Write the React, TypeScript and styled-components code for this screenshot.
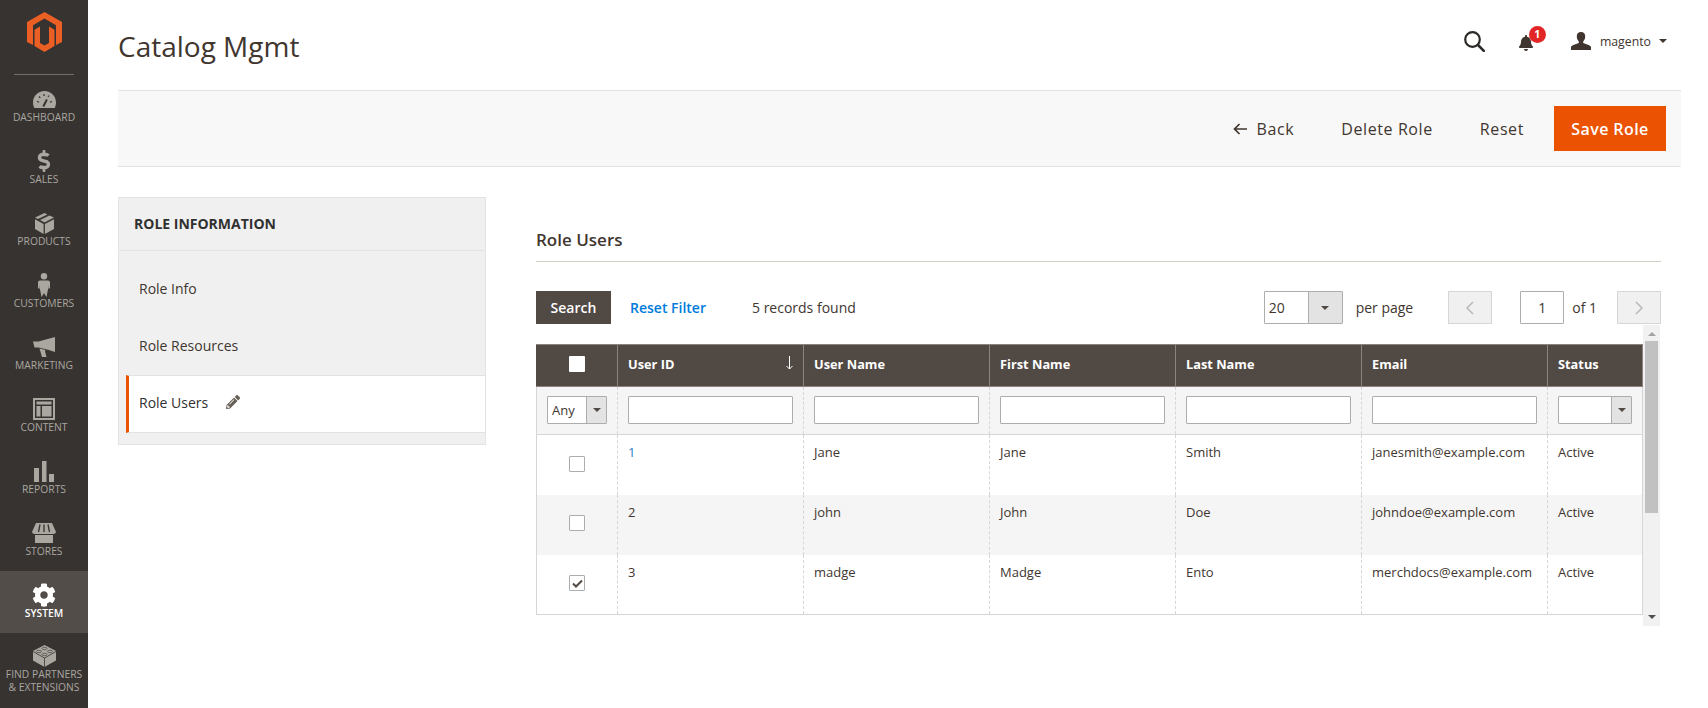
import React from "react";
import styled, { createGlobalStyle } from "styled-components";
import { FaDollarSign, FaCog, FaPencilAlt, FaBell } from "react-icons/fa";

const Global = createGlobalStyle`
  html, body { margin: 0; padding: 0; height: 100%; overflow: hidden; background: #fff; }
  body { font-family: "Open Sans", "Liberation Sans", sans-serif; color: #41362f; }
  * { box-sizing: border-box; }
`;

const Page = styled.div`display: flex; height: 708px; width: 1708px;`;
const Sidebar = styled.nav`width: 88px; flex: none; background: #373330; display: flex; flex-direction: column; align-items: stretch;`;
const LogoBox = styled.div`height: 75px; margin: 0 14px; border-bottom: 1px solid #736e6a; display: flex; justify-content: center; padding-top: 12px;`;
const NavItem = styled.a<{ $active?: boolean; $two?: boolean }>`
  height: 62px; display: flex; flex-direction: column; align-items: center; padding-top: ${p => (p.$two ? 11 : 12)}px;
  background: ${p => (p.$active ? "#524d49" : "transparent")};
  color: ${p => (p.$active ? "#ffffff" : "#aaa6a0")};
  font-weight: ${p => (p.$active ? 600 : 400)};
`;
const NavIcon = styled.div`height: 24px; width: 100%; display: flex; align-items: center; justify-content: center; flex: none;`;
const NavLabel = styled.span`font-size: 10.3px; line-height: 13px; text-transform: uppercase; text-align: center; white-space: nowrap;`;

const Main = styled.main`flex: 1; min-width: 0; padding: 0 27px 0 30px; display: flex; flex-direction: column;`;
const Header = styled.header`height: 90px; flex: none; display: flex; align-items: center; justify-content: space-between;`;
const Title = styled.h1`margin: 2px 0 0; font-size: 28px; font-weight: 400; color: #41362f; line-height: 36px;`;
const HeaderTools = styled.div`display: flex; align-items: center; padding-right: 14px; height: 24px; margin-top: -8px;`;
const BellWrap = styled.div`position: relative; margin-left: 33px; width: 16px; height: 17px; margin-top: 2px;`;
const Badge = styled.span`position: absolute; left: 11px; top: -8px; width: 17px; height: 17px; border-radius: 50%; background: #e22626; color: #fff; font-size: 10.5px; font-weight: 700; display: flex; align-items: center; justify-content: center; line-height: 1;`;
const UserGap = styled.span`width: 37px;`;
const UserName = styled.span`font-size: 12.3px; color: #41362f; margin-left: 9px; margin-right: 8px;`;
const Caret = styled.span<{ $w?: number; $c?: string }>`display: inline-block; width: 0; height: 0; border-left: ${p => (p.$w ?? 4)}px solid transparent; border-right: ${p => (p.$w ?? 4)}px solid transparent; border-top: ${p => ((p.$w ?? 4) + 0)}px solid ${p => p.$c ?? "#41362f"};`;

const ActionBar = styled.div`height: 77px; flex: none; background: #f8f8f8; border-top: 1px solid #e3e3e3; border-bottom: 1px solid #e3e3e3; display: flex; align-items: center; justify-content: flex-end; padding-right: 15px;`;
const ActionLink = styled.a`display: flex; align-items: center; font-size: 16px; letter-spacing: .6px; color: #41362f; font-weight: 500; margin-right: 47px;`;
const SaveButton = styled.button`width: 112px; height: 45px; border: 0; background: #eb5202; color: #fff; font: 600 16px "Open Sans", sans-serif; letter-spacing: .4px; margin-left: -17px;`;

const Content = styled.div`display: flex; margin-top: 30px; align-items: flex-start;`;
const Panel = styled.aside`width: 368px; flex: none; background: #f0f0f0; border: 1px solid #e3e3e3; padding-bottom: 11px;`;
const PanelTitle = styled.div`height: 53px; padding: 0 0 1px 15px; display: flex; align-items: center; font-weight: 700; font-size: 14px; color: #303030; border-bottom: 1px solid #e3e3e3;`;
const PanelLinks = styled.div`padding-top: 10px;`;
const PanelLink = styled.a<{ $active?: boolean }>`
  display: flex; align-items: center; height: ${p => (p.$active ? 58 : 57)}px; font-size: 14px; color: ${p => (p.$active ? "#303030" : "#41362f")};
  padding-left: ${p => (p.$active ? 10 : 20)}px; margin-left: ${p => (p.$active ? 7 : 0)}px; padding-bottom: ${p => (p.$active ? 4 : 2)}px;
  ${p => p.$active ? "background:#fff;border-left:3px solid #eb5202;border-top:1px solid #e3e3e3;border-bottom:1px solid #e3e3e3;" : ""}
`;
const PencilBox = styled.span`margin-left: 18px; display: flex; color: #676056;`;

const Section = styled.section`margin-left: 50px; width: 1125px; display: flex; flex-direction: column;`;
const SectionTitle = styled.h2`margin: 0; height: 65px; font-size: 17px; font-weight: 600; color: #41362f; border-bottom: 1px solid #d6d1c5; padding-top: 33px; line-height: 20px;`;

const Toolbar = styled.div`display: flex; align-items: center; height: 33px; margin-top: 29px;`;
const SearchButton = styled.button`width: 75px; height: 33px; border: 0; background: #514943; color: #fff; font: 600 14px "Open Sans", sans-serif;`;
const ResetLink = styled.a`color: #007bdb; font-size: 14px; font-weight: 600; margin-left: 19px;`;
const Found = styled.span`font-size: 14px; color: #41362f; margin-left: 46px;`;
const Spacer = styled.div`flex: 1;`;
const PerSelect = styled.div`width: 79px; height: 33px; border: 1px solid #adadad; background: #fff; display: flex; font-size: 14px; border-radius: 1px;`;
const SelectValue = styled.span<{ $lh?: number }>`flex: 1; padding-left: 4px; line-height: ${p => p.$lh ?? 31}px;`;
const SelectArrow = styled.span<{ $w: number }>`width: ${p => p.$w}px; flex: none; background: #e3e3e3; border-left: 1px solid #adadad; display: flex; align-items: center; justify-content: center;`;
const PagerText = styled.span<{ $ml: number }>`font-size: 14px; margin-left: ${p => p.$ml}px;`;
const PageButton = styled.div<{ $ml: number }>`width: 44px; height: 33px; margin-left: ${p => p.$ml}px; background: #f0f0f0; border: 1px solid #d6d6d6; display: flex; align-items: center; justify-content: center;`;
const PageInput = styled.input`width: 44px; height: 33px; margin-left: 28px; border: 1px solid #adadad; border-radius: 1px; text-align: center; font: 14px "Open Sans", sans-serif; color: #41362f; padding: 0;`;

const GridArea = styled.div`display: flex; height: 301px; margin-top: 1px;`;
const TableBox = styled.div`width: 1107px; flex: none; padding-top: 19px; overflow: hidden;`;
const GridTable = styled.table`width: 1106px; table-layout: fixed; border-collapse: collapse; border-left: 1px solid #d6d6d6; border-right: 1px solid #d6d6d6; border-bottom: 1px solid #d6d6d6;`;
const Th = styled.th`height: 42px; background: #514943; color: #fff; font-size: 12.8px; font-weight: 700; text-align: left; padding: 0 10px 3px; border: 1px solid #8a837f; position: relative; &:first-child{ border-left-color:#514943; padding: 0 0 5px; text-align: center; }`;
const SortArrow = styled.svg`position: absolute; right: 10px; top: 11px;`;
const FilterCell = styled.td<{ $first?: boolean }>`height: 48px; background: #f5f5f5; padding: 0 10px 2px; border-left: ${p => (p.$first ? "0" : "1px dashed #d6d6d6")}; border-bottom: 1px solid #d6d6d6;`;
const FilterInput = styled.input`display: block; width: 100%; height: 28px; border: 1px solid #adadad; border-radius: 1px; background: #fff;`;
const FilterSelect = styled.div<{ $w: number }>`display: flex; width: ${p => p.$w}px; height: 28px; border: 1px solid #adadad; border-radius: 1px; background: #fff; font-size: 13px; line-height: 28px;`;
const Td = styled.td<{ $odd: boolean; $link?: boolean }>`height: 60px; vertical-align: top; font-size: 13px; line-height: 18px; padding: 8px 10px 0; border-left: 1px dashed #d6d6d6; background: ${p => (p.$odd ? "#f5f5f5" : "#fff")}; color: ${p => (p.$link ? "#2f7fc4" : "#41362f")}; white-space: nowrap; &:first-child{ border-left: 0; text-align: center; padding: 18px 0 0; }`;
const CheckBox = styled.span<{ $white?: boolean }>`display: inline-flex; align-items: center; justify-content: center; vertical-align: middle; width: 16px; height: 16px; background: #fff; border: ${p => (p.$white ? "0" : "1px solid #adadad")}; border-radius: 1px;`;

const ScrollTrack = styled.div`width: 17px; flex: none; background: #f1f1f1; display: flex; flex-direction: column; align-items: center;`;
const ScrollUp = styled.span`margin-top: 7px; width: 0; height: 0; border-left: 4px solid transparent; border-right: 4px solid transparent; border-bottom: 4px solid #a3a3a3;`;
const ScrollThumb = styled.div`width: 13px; height: 172px; background: #c1c1c1; margin-top: 5px;`;
const ScrollDown = styled.span`margin-top: auto; margin-bottom: 7px; width: 0; height: 0; border-left: 4px solid transparent; border-right: 4px solid transparent; border-top: 4px solid #505050;`;

const ic = "#aaa6a0";
const Logo = () => (
  <svg width="35" height="40" viewBox="0 0 35 40" fill="#eb5f24">
    <path d="M17.500 0 L0 10 V30 L6 33 V13.300 L17.500 6.500 L29 13.300 V33 L35 30 V10 Z" />
    <path d="M17.500 33.500 L13 31 V14.500 L7.500 17.800 V34 L17.500 40 L27.500 34 V17.800 L22 14.500 V31 Z" />
  </svg>
);
const Gauge = () => (
  <svg width="23" height="17" viewBox="0 0 23 17">
    <path fill={ic} d="M11.500 0C5 0 0 5.200 0 11.500c0 2 .5 3.800 1.300 5.500h20.400c.8-1.700 1.300-3.500 1.300-5.500C23 5.200 18 0 11.500 0z" />
    <path stroke="#373330" strokeWidth="1.200" fill="none" d="M4 10.500l2 .6M6 5.500l1.300 1.300M11 3v2M16 4.500l-1 1.500M19 10.500l-2 .6" />
    <path stroke="#373330" strokeWidth="2" fill="none" d="M10.300 15.500l3.600-7" />
  </svg>
);
const Cube = () => (
  <svg width="19" height="21" viewBox="0 0 19 21" fill={ic}>
    <path d="M9.500 0L0 4.500l3 1.600L12.400 1.400zM14.400 2.400L5 7.100l4.500 2.300L19 4.600z" />
    <path d="M0 6.300V16l8.600 5v-9.900zM19 6.300l-9.100 4.800V21l9.100-5z" />
  </svg>
);
const Person = () => (
  <svg width="12" height="24" viewBox="0 0 12 24" fill={ic}>
    <circle cx="6" cy="3.200" r="3.200" />
    <path d="M2 7.500h8c1.200 0 2 .8 2 2V15l-1.500 1V12l-.5 4.500L8.500 24l-2-3-.5-1-.5 1-2 3L2 16.500 1.500 12v4L0 15V9.500c0-1.200.8-2 2-2z" />
  </svg>
);
const Megaphone = () => (
  <svg width="22" height="20" viewBox="0 0 22 20" fill={ic}>
    <path d="M0 4.500h5.500L22 0v15L15 12.800 5.500 10.500H1.500z" />
    <path d="M6.500 11.500l6 1.500-.5 1.500L13.500 20H9z" />
  </svg>
);
const Layout = () => (
  <svg width="22" height="22" viewBox="0 0 22 22" fill={ic}>
    <path fillRule="evenodd" d="M0 0h22v22H0zM2 2v18h18V2zM3.500 3.500h15v3h-15zM3.500 8h4v10.500h-4zM9 8h9.500v10.500H9z" />
  </svg>
);
const Bars = () => (
  <svg width="20" height="21" viewBox="0 0 20 21" fill={ic}>
    <rect x="0" y="7" width="5" height="14" />
    <rect x="8" y="0" width="4.500" height="21" />
    <rect x="15" y="13" width="5" height="8" />
  </svg>
);
const Store = () => (
  <svg width="24" height="20" viewBox="0 0 24 20" fill={ic}>
    <path d="M4 0h16l4 9c-.3 1.200-1.400 2-2.500 2H2.500C1.400 11 .3 10.200 0 9z M3 12h18v8H3z" />
    <path stroke="#373330" strokeWidth="1.300" fill="none" d="M8 1.500L6.500 9M12 1.500V9M16 1.500L17.500 9" />
  </svg>
);
const Brick = () => (
  <svg width="23" height="22" viewBox="0 0 23 22" fill={ic}>
    <path d="M11.500 0L0 6v9.500L11.500 22 23 15.500V6z" />
    <path stroke="#373330" strokeWidth=".8" fill="none" d="M0 6.500l11.500 6.500L23 6.500M11.500 13v9" />
    <ellipse cx="11.500" cy="3.500" rx="2.500" ry="1.200" stroke="#373330" strokeWidth=".6" fill="none" />
    <ellipse cx="6" cy="6.500" rx="2.500" ry="1.200" stroke="#373330" strokeWidth=".6" fill="none" />
    <ellipse cx="17" cy="6.500" rx="2.500" ry="1.200" stroke="#373330" strokeWidth=".6" fill="none" />
    <ellipse cx="11.500" cy="9.500" rx="2.500" ry="1.200" stroke="#373330" strokeWidth=".6" fill="none" />
  </svg>
);
const SearchIcon = () => (
  <svg width="21" height="21" viewBox="0 0 21 21" fill="none" stroke="#2d2926" strokeWidth="2.200" strokeLinecap="round">
    <circle cx="8.500" cy="8.500" r="7.300" />
    <path d="M14 14l5.800 5.800" strokeWidth="2.600" />
  </svg>
);
const UserIcon = () => (
  <svg width="20" height="18" viewBox="0 0 20 18" fill="#41362f">
    <path d="M10 0c2.800 0 4.400 2 4.200 4.800-.1 2-1 3.600-2 4.600v1.300c.5 1 7.800 2.300 7.800 4.300V18H0v-3c0-2 7.300-3.300 7.800-4.300V9.400c-1-1-1.900-2.600-2-4.600C5.600 2 7.200 0 10 0z" />
  </svg>
);
const BackIcon = styled.svg`margin-right: 10px;`;
const BackArrow = () => (
  <BackIcon width="14" height="12" viewBox="0 0 14 12" fill="none" stroke="#41362f" strokeWidth="1.700">
    <path d="M14 6H1.500M6.500 1L1.500 6l5 5" />
  </BackIcon>
);
const Chevron = ({ left = false }) => (
  <svg width="8" height="14" viewBox="0 0 8 14" fill="none" stroke="#b8b8b8" strokeWidth="1.500">
    <path d={left ? "M7 1L1 7l6 6" : "M1 1l6 6-6 6"} />
  </svg>
);
const Check = () => (
  <svg width="11" height="9" viewBox="0 0 11 9" fill="none" stroke="#514943" strokeWidth="2"><path d="M1 4.500l3 3L10 1.500" /></svg>
);

const items: { label: React.ReactNode; icon: React.ReactNode; active?: boolean; two?: boolean }[] = [
  { label: "Dashboard", icon: <Gauge /> },
  { label: "Sales", icon: <FaDollarSign size={22} color={ic} /> },
  { label: "Products", icon: <Cube /> },
  { label: "Customers", icon: <Person /> },
  { label: "Marketing", icon: <Megaphone /> },
  { label: "Content", icon: <Layout /> },
  { label: "Reports", icon: <Bars /> },
  { label: "Stores", icon: <Store /> },
  { label: "System", icon: <FaCog size={24} color="#fff" />, active: true },
  { label: <>Find Partners<br />&amp; Extensions</>, icon: <Brick />, two: true },
];

const rows = [
  ["1", "Jane", "Jane", "Smith", "janesmith@example.com", "Active"],
  ["2", "john", "John", "Doe", "johndoe@example.com", "Active"],
  ["3", "madge", "Madge", "Ento", "merchdocs@example.com", "Active"],
];
const cols = ["User ID", "User Name", "First Name", "Last Name", "Email", "Status"];
const colWidths = [81, 186, 186, 186, 186, 186, 95];

export default function App() {
  return (
    <Page>
      <Global />
      <Sidebar>
        <LogoBox><Logo /></LogoBox>
        {items.map((it, i) => (
          <NavItem key={i} $active={it.active} $two={it.two}>
            <NavIcon>{it.icon}</NavIcon>
            <NavLabel>{it.label}</NavLabel>
          </NavItem>
        ))}
      </Sidebar>
      <Main>
        <Header>
          <Title>Catalog Mgmt</Title>
          <HeaderTools>
            <SearchIcon />
            <BellWrap><FaBell size={16} color="#41362f" /><Badge>1</Badge></BellWrap>
            <UserGap />
            <UserIcon />
            <UserName>magento</UserName>
            <Caret />
          </HeaderTools>
        </Header>
        <ActionBar>
          <ActionLink><BackArrow />Back</ActionLink>
          <ActionLink>Delete Role</ActionLink>
          <ActionLink>Reset</ActionLink>
          <SaveButton>Save Role</SaveButton>
        </ActionBar>
        <Content>
          <Panel>
            <PanelTitle>ROLE INFORMATION</PanelTitle>
            <PanelLinks>
              <PanelLink>Role Info</PanelLink>
              <PanelLink>Role Resources</PanelLink>
              <PanelLink $active>Role Users<PencilBox><FaPencilAlt size={14} /></PencilBox></PanelLink>
            </PanelLinks>
          </Panel>
          <Section>
            <SectionTitle>Role Users</SectionTitle>
            <Toolbar>
              <SearchButton>Search</SearchButton>
              <ResetLink>Reset Filter</ResetLink>
              <Found>5 records found</Found>
              <Spacer />
              <PerSelect><SelectValue>20</SelectValue><SelectArrow $w={34}><Caret $c="#514943" /></SelectArrow></PerSelect>
              <PagerText $ml={13}>per page</PagerText>
              <PageButton $ml={35}><Chevron left /></PageButton>
              <PageInput defaultValue="1" />
              <PagerText $ml={8}>of 1</PagerText>
              <PageButton $ml={20}><Chevron /></PageButton>
            </Toolbar>
            <GridArea>
              <TableBox>
                <GridTable>
                  <colgroup>
                    {colWidths.map((w, i) => <col key={i} width={w} />)}
                  </colgroup>
                  <thead>
                    <tr>
                      <Th><CheckBox $white /></Th>
                      {cols.map((c, i) => (
                        <Th key={c}>{c}{i === 0 && (
                          <SortArrow width="7" height="14" viewBox="0 0 7 14" fill="none" stroke="#fff" strokeWidth="1"><path d="M3.500 0v13M.5 10l3 3 3-3" /></SortArrow>
                        )}</Th>
                      ))}
                    </tr>
                    <tr>
                      <FilterCell $first>
                        <FilterSelect $w={60}><SelectValue $lh={27}>Any</SelectValue><SelectArrow $w={20}><Caret $c="#514943" /></SelectArrow></FilterSelect>
                      </FilterCell>
                      {[0, 1, 2, 3, 4].map(i => <FilterCell key={i}><FilterInput readOnly /></FilterCell>)}
                      <FilterCell><FilterSelect $w={74}><SelectValue /><SelectArrow $w={20}><Caret $c="#514943" /></SelectArrow></FilterSelect></FilterCell>
                    </tr>
                  </thead>
                  <tbody>
                    {rows.map((r, i) => (
                      <tr key={r[0]}>
                        <Td $odd={i === 1}><CheckBox>{i === 2 && <Check />}</CheckBox></Td>
                        {r.map((v, j) => <Td key={j} $odd={i === 1} $link={i === 0 && j === 0}>{v}</Td>)}
                      </tr>
                    ))}
                  </tbody>
                </GridTable>
              </TableBox>
              <ScrollTrack>
                <ScrollUp />
                <ScrollThumb />
                <ScrollDown />
              </ScrollTrack>
            </GridArea>
          </Section>
        </Content>
      </Main>
    </Page>
  );
}
